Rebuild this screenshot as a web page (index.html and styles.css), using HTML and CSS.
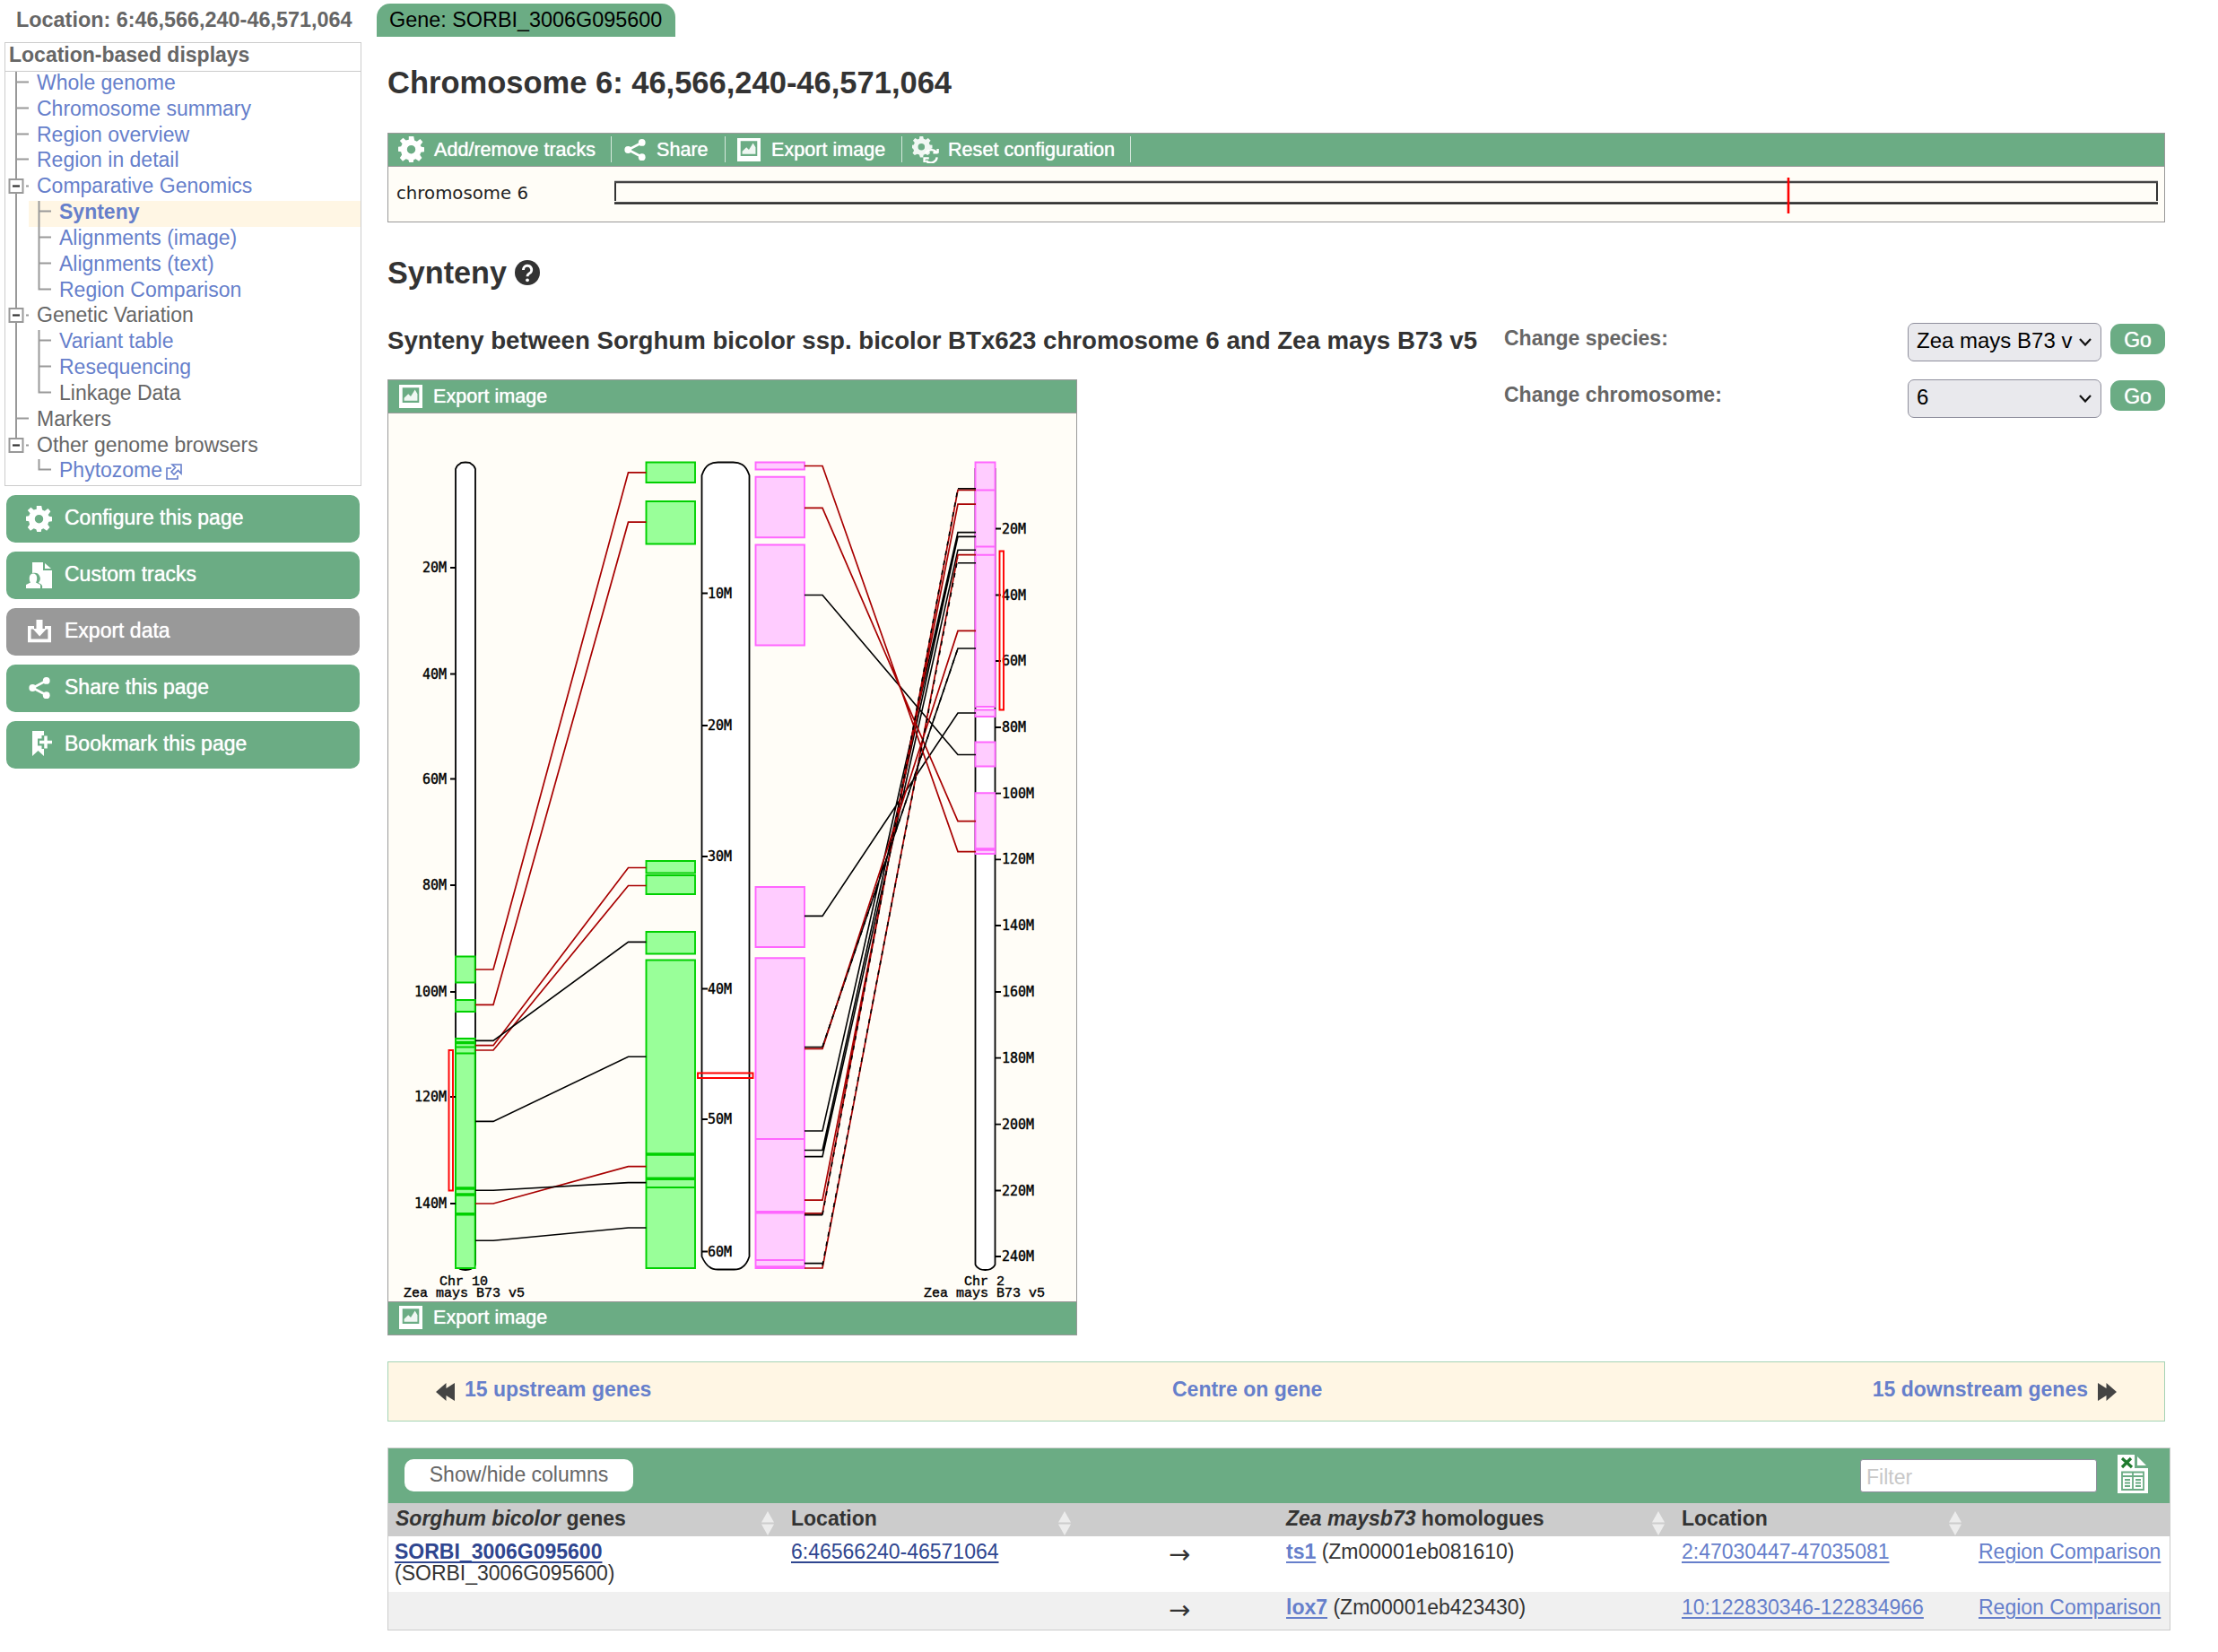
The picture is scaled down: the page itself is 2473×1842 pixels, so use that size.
FILE: index.html
```html
<!DOCTYPE html>
<html lang="en">
<head>
<meta charset="utf-8">
<title>Synteny - Sorghum bicolor</title>
<link rel="stylesheet" href="styles.css">
</head>
<body>
<svg class="defs" aria-hidden="true">
  <symbol id="gear" viewBox="0 0 32 32"><path fill="currentColor" fill-rule="evenodd" d="M13 0h6l1 5 3 1.300 4-3 3.200 3.700-3 4L28.500 13l3.500.500v5.500l-4 .500-1.300 3.500 2.500 3.500-3.700 4-4-2.700L19 29l-.500 3h-5l-1-3-3-1.200-4 2.700-3.500-4 2.500-3.500L3.500 19 0 18.500V13l3.500-.500L5 9 2 5.500 6 2l3.500 3L13 4zM16 11a5.200 5.200 0 1 0 0 10.400A5.200 5.200 0 0 0 16 11z"/></symbol>
  <symbol id="share" viewBox="0 0 32 32"><g fill="currentColor"><circle cx="6.500" cy="16" r="4.800"/><circle cx="25.500" cy="6" r="4.800"/><circle cx="25.500" cy="26" r="4.800"/></g><path d="M25 6.500 6.500 16 25 25.500" fill="none" stroke="currentColor" stroke-width="3.200"/></symbol>
  <symbol id="image" viewBox="0 0 28 28"><path fill="currentColor" fill-rule="evenodd" d="M0 0h28v28H0zM4 3.500v18h20v-18z"/><path fill="currentColor" d="M6 19v-3l5-5 3 3 5-8 3 5v8z" opacity=".9"/></symbol>
  <symbol id="reset" viewBox="0 0 32 32"><path fill="currentColor" fill-rule="evenodd" opacity=".9" d="M9 0h4l.7 3 2.500 1 2.800-2 3 3-2 2.700 1 2.300 3 .500v4l-3 .800-1 2 1.500 2.700-3 2.500-2.500-1.500-2.500 1L13 25H9.500l-1-3.200L6 21l-3 1.500L.500 20l1.700-3-1-2.300L0 14v-3.500L2 10l1-2.500L1 5l2.500-3 3 1.700L8.500 3zM11 8.500a4 4 0 1 0 0 8 4 4 0 0 0 0-8z"/><path d="M30.500 20v-5M30.500 19.500h-5.500M16 20a8 8 0 0 1 13-1M14.500 31v-5h5.500M29.500 25a7.500 7.500 0 0 1-13 4" fill="none" stroke="currentColor" stroke-width="2.600"/></symbol>
  <symbol id="custom" viewBox="0 0 29 29"><path fill="currentColor" d="M7 0h12v9h10v20H18c1-3-1-5-4-6 1-2 3-4 1-8-1-3-4-4-8-3z"/><path fill="currentColor" d="M21 1l7 6h-7z"/><path fill="currentColor" d="M0 29v-4l5-2.500c-2-3-2-10 3-10s5 7 3 10l5 2.500v4z"/></symbol>
  <symbol id="export" viewBox="0 0 26 26"><path fill="currentColor" d="M9.500 0h7v10h4.500l-7.800 8.500L5.500 10h4z"/><path fill="none" stroke="currentColor" stroke-width="3.600" d="M7 8.800H1.800v14.600h22.400V8.800H19"/></symbol>
  <symbol id="bookmark" viewBox="0 0 22 29"><path fill="currentColor" d="M0 0h13v5h-2.500v3.500H6v8h4.500V20H13v8l-6.500-6L0 28z"/><path d="M8 12.500h14M15 5.500v14" stroke="currentColor" stroke-width="3.500"/></symbol>
  <symbol id="rew" viewBox="0 0 22 20"><path fill="#444" d="M0 10 11.500 0v6L21 0v20l-9.500-6v6z"/></symbol>
  <symbol id="fwd" viewBox="0 0 22 20"><path fill="#444" d="M22 10 10.500 0v6L1 0v20l9.500-6v6z"/></symbol>
  <symbol id="sort" viewBox="0 0 14 27"><path fill="#ececec" d="M7 0l7 12.500H0zM0 14.500h14L7 27z"/></symbol>
  <symbol id="mid" viewBox="0 0 60 29"><path d="M12 0v29M12 11.500h14" fill="none" stroke="#999" stroke-width="2"/></symbol>
  <symbol id="box" viewBox="0 0 60 29"><path d="M12 0v4M12 21v8M23 12.500h3" stroke="#999" stroke-width="2"/><path d="M4.500 5h15v15h-15z" fill="#fff" stroke="#999" stroke-width="2"/><path d="M8 12.500h8" stroke="#333" stroke-width="2.200"/></symbol>
  <symbol id="boxend" viewBox="0 0 60 29"><path d="M12 0v4M23 12.500h3" stroke="#999" stroke-width="2"/><path d="M4.500 5h15v15h-15z" fill="#fff" stroke="#999" stroke-width="2"/><path d="M8 12.500h8" stroke="#333" stroke-width="2.200"/></symbol>
  <symbol id="sub" viewBox="0 0 60 29"><path d="M12 0v29M37.500 0v29M37.500 11.500h13.500" fill="none" stroke="#999" stroke-width="2"/></symbol>
  <symbol id="subend" viewBox="0 0 60 29"><path d="M12 0v29M37.500 0v11.500h13.500" fill="none" stroke="#999" stroke-width="2"/></symbol>
  <symbol id="leaf" viewBox="0 0 60 29"><path d="M37.500 0v11.500h13.500" fill="none" stroke="#999" stroke-width="2"/></symbol>
</svg>

<div class="page">
  <aside class="side">
    <div class="loc-tab">Location: 6:46,566,240-46,571,064</div>
    <nav class="tree">
      <h2>Location-based displays</h2>
      <ul>
        <li><svg><use href="#mid"/></svg><a>Whole genome</a></li>
        <li><svg><use href="#mid"/></svg><a>Chromosome summary</a></li>
        <li><svg><use href="#mid"/></svg><a>Region overview</a></li>
        <li><svg><use href="#mid"/></svg><a>Region in detail</a></li>
        <li><svg><use href="#box"/></svg><a>Comparative Genomics</a></li>
        <li class="deep active"><svg><use href="#sub"/></svg><a>Synteny</a></li>
        <li class="deep"><svg><use href="#sub"/></svg><a>Alignments (image)</a></li>
        <li class="deep"><svg><use href="#sub"/></svg><a>Alignments (text)</a></li>
        <li class="deep"><svg><use href="#subend"/></svg><a>Region Comparison</a></li>
        <li><svg><use href="#box"/></svg><span>Genetic Variation</span></li>
        <li class="deep"><svg><use href="#sub"/></svg><a>Variant table</a></li>
        <li class="deep"><svg><use href="#sub"/></svg><a>Resequencing</a></li>
        <li class="deep"><svg><use href="#subend"/></svg><span>Linkage Data</span></li>
        <li><svg><use href="#mid"/></svg><span>Markers</span></li>
        <li><svg><use href="#boxend"/></svg><span>Other genome browsers</span></li>
        <li class="deep"><svg><use href="#leaf"/></svg><a>Phytozome</a><svg class="ext" viewBox="0 0 18 18"><path d="M7 1h10v10l-3.500-3.500L9 12 6 9l4.500-4.500zM6 5H1v12h12v-4" fill="none" stroke="#667fcb" stroke-width="1.600"/></svg></li>
      </ul>
    </nav>
    <div class="tools">
      <a><svg class="i29"><use href="#gear"/></svg>Configure this page</a>
      <a><svg class="i29"><use href="#custom"/></svg>Custom tracks</a>
      <a class="off"><svg class="i26"><use href="#export"/></svg>Export data</a>
      <a><svg class="i26"><use href="#share"/></svg>Share this page</a>
      <a><svg class="ibm"><use href="#bookmark"/></svg>Bookmark this page</a>
    </div>
  </aside>

  <main class="main">
    <div class="gene-tab">Gene: SORBI_3006G095600</div>
    <h1>Chromosome 6: 46,566,240-46,571,064</h1>

    <section class="panel overview">
      <div class="bar">
        <a class="b1"><svg><use href="#gear"/></svg>Add/remove tracks</a>
        <a class="b2"><svg><use href="#share"/></svg>Share</a>
        <a class="b3"><svg><use href="#image"/></svg>Export image</a>
        <a class="b4"><svg><use href="#reset"/></svg>Reset configuration</a>
      </div>
      <svg class="ideogram" viewBox="433 186 1980 61">
        <text x="442" y="222" font-size="19.700" textLength="147" fill="#222">chromosome 6</text>
        <path d="M686 204v20M2405 204v20" stroke="#333" stroke-width="2"/>
        <path d="M685 203h1721" stroke="#444" stroke-width="2.600"/>
        <path d="M685 226.500h1721" stroke="#222" stroke-width="2.400"/>
        <path d="M1994 198v40" stroke="#f00" stroke-width="2.600"/>
      </svg>
    </section>

    <h2 class="title">Synteny <svg viewBox="0 0 28 28"><circle cx="14" cy="14" r="14" fill="#333"/><path d="M9.500 11a4.600 4.600 0 1 1 6.500 4c-1.500.8-2 1.500-2 3.200" fill="none" stroke="#fff" stroke-width="3"/><circle cx="14" cy="22.300" r="1.900" fill="#fff"/></svg></h2>

    <div class="split">
      <div class="left">
        <h3>Synteny between Sorghum bicolor ssp. bicolor BTx623 chromosome 6 and Zea mays B73 v5</h3>
        <section class="panel chart">
          <div class="bar"><a class="b1"><svg><use href="#image"/></svg>Export image</a></div>
          <svg class="map" viewBox="433 461 767 990">
            <g fill="#fff" stroke="#000" stroke-width="1.800">
              <path d="M508 523q1-4 5-6 1-1.500 6-1.500t6 1.500q4 2 5 6V1410q-1 3-5 5-2 1-6 1t-6-1q-4-2-5-5z"/>
              <path d="M782.500 530q3-9 8-12 4-2.500 10-2.500h17q6 0 10 2.500 5 3 8 12V1401q-3 9-8 12-3 2.500-9 2.500h-18q-6 0-9-2.500-5-3-9-12z"/>
              <path d="M1087.500 523V1410q1 3 5 5 2 1 6 1t6-1q4-2 5-5V523z"/>
            </g>
            <g fill="#9f9" stroke="#00d000" stroke-width="1.900">
              <path d="M720.500 515.500h54.500v22.500h-54.500zM720.500 559h54.500v47.500h-54.500zM720.500 960h54.500v13.500h-54.500zM720.500 976h54.500v21h-54.500zM720.500 1039h54.500v24.500h-54.500zM720.500 1070.500h54.500v343.500h-54.500z"/>
              <path d="M508 1066.500h21.700v29h-21.700zM508 1115h21.700v13h-21.700zM508 1158h21.700v256h-21.700z"/>
              <path d="M508 1167.500h21.700M508 1174.500h21.700M720.500 1324h54.500"/>
              <path stroke-width="3.400" d="M720.500 1287h54.500M720.500 1314.300h54.500M508 1162.600h21.700M508 1325h21.700M508 1332h21.700M508 1353.700h21.700"/>
            </g>
            <g fill="#fcf" stroke="#ff66ff" stroke-width="1.900">
              <path d="M842.500 515.500h54.500v8h-54.500zM842.500 531.700h54.500v67.500h-54.500zM842.500 607.500h54.500v112h-54.500zM842.500 989h54.500v67h-54.500zM842.500 1068.300h54.500v345.700h-54.500z"/>
              <path d="M1087.500 515.500h22v272.500h-22zM1087.500 791.500h22v7.500h-22zM1087.500 827.500h22v27h-22zM1087.500 884.300h22v67.700h-22z"/>
              <path d="M842.500 1270h54.500M842.500 1405h54.500M1087.500 546.500h22M1087.500 609.500h22M1087.500 618.700h22"/>
              <path stroke-width="3.400" d="M842.500 1351.800h54.500M842.500 1413h54.500M1087.500 947h22"/>
            </g>
            <g fill="none" stroke="#000" stroke-width="1.600">
              <path d="M897 663.500h20L1068 841.500h20M897 1021.400h20L1068 795h20M897 1167.500h20L1068 723h20M897 1261h20L1068 593.600h20M897 1282.500h20L1068 598.400h20M897 1289.600h20L1068 613.200h20"/>
            </g>
            <g fill="none" stroke="#a80000" stroke-width="1.700">
              <path d="M530 1081h20L700.500 526.800h20M530 1120.400h20L700.500 582.200h20M530 1165.700h20L700.500 967.500h20M530 1171h20L700.500 987.500h20M530 1342h20L700.500 1300.700h20"/>
              <path d="M897 519.500h20L1068 949.600h20M897 566.400h20L1068 915.600h20M897 1169.300h20L1068 703.400h20M897 1338.200h20L1068 562.200h20M897 1352.900h20L1068 546.400h20M897 1414h20L1068 618.700h20"/>
            </g>
            <g fill="none" stroke="#000" stroke-width="1.600">
              <path d="M530 1160.400h20L700.500 1050.400h20M530 1250.400h20L700.500 1178.200h20M530 1327.300h20L700.500 1318.600h20M530 1383.200h20L700.500 1369h20"/>
              <path stroke-dasharray="5 6" d="M917 1354.600L1068 544.700M917 1411L1068 622M917 1167.500L1068 723"/>
              <path d="M897 1354.600h20M1068 544.700h20M897 1408.600h20M1068 627.700h20"/>
            </g>
            <path d="M502 633h6M502 751.500h6M502 868.500h6M502 987h6M502 1106h6M502 1223h6M502 1342h6M783 661.500h6M783 809h6M783 955h6M783 1102.500h6M783 1248h6M783 1395.500h6M1110 589.500h6M1110 663.500h6M1110 737h6M1110 811h6M1110 884.600h6M1110 958.300h6M1110 1032h6M1110 1106h6M1110 1179.600h6M1110 1253.600h6M1110 1327.500h6M1110 1401h6" stroke="#000" stroke-width="1.800"/>
            <g class="lbl" text-anchor="end">
              <text x="498" y="638">20M</text><text x="498" y="756.500">40M</text><text x="498" y="873.500">60M</text><text x="498" y="992">80M</text><text x="498" y="1111">100M</text><text x="498" y="1228">120M</text><text x="498" y="1347">140M</text>
            </g>
            <g class="lbl">
              <text x="789" y="666.500">10M</text><text x="789" y="814">20M</text><text x="789" y="960">30M</text><text x="789" y="1107.500">40M</text><text x="789" y="1253">50M</text><text x="789" y="1400.500">60M</text>
              <text x="1117" y="594.500">20M</text><text x="1117" y="668.500">40M</text><text x="1117" y="742">60M</text><text x="1117" y="816">80M</text><text x="1117" y="889.600">100M</text><text x="1117" y="963.300">120M</text><text x="1117" y="1037">140M</text><text x="1117" y="1111">160M</text><text x="1117" y="1184.600">180M</text><text x="1117" y="1258.600">200M</text><text x="1117" y="1332.500">220M</text><text x="1117" y="1406">240M</text>
            </g>
            <g class="lbl names">
              <text x="490" y="1432.500">Chr 10</text><text x="450" y="1445.500">Zea mays B73 v5</text>
              <text x="1075" y="1432.500">Chr 2</text><text x="1030" y="1445.500">Zea mays B73 v5</text>
            </g>
            <path d="M500.500 1171h4.500v156.500h-4.500zM778 1196.500h61.500v5.500h-61.500zM1114.500 614.500h4.500v177h-4.500z" fill="none" stroke="#f00" stroke-width="1.900"/>
          </svg>
          <div class="bar foot"><a class="b1"><svg><use href="#image"/></svg>Export image</a></div>
        </section>
      </div>
      <form class="change">
        <div class="row"><label>Change species:</label><div class="select"><span>Zea mays B73 v</span><svg viewBox="0 0 14 9"><path d="M1 1l6 6.500L13 1" fill="none" stroke="#111" stroke-width="2.200"/></svg></div><button type="button">Go</button></div>
        <div class="row"><label>Change chromosome:</label><div class="select"><span>6</span><svg viewBox="0 0 14 9"><path d="M1 1l6 6.500L13 1" fill="none" stroke="#111" stroke-width="2.200"/></svg></div><button type="button">Go</button></div>
      </form>
    </div>

    <nav class="pager">
      <a><svg><use href="#rew"/></svg>15 upstream genes</a>
      <a>Centre on gene</a>
      <a>15 downstream genes<svg><use href="#fwd"/></svg></a>
    </nav>

    <section class="genes">
      <div class="gbar">
        <a class="cols">Show/hide columns</a>
        <input type="text" placeholder="Filter">
        <svg class="xls" viewBox="0 0 34 43"><path fill="#fff" d="M0 0h19v15h15v28H0z"/><path fill="#fff" d="M22 2l10 10H22z"/><path d="M5 4l11 10M15 4L5 14" stroke="#1f7a2e" stroke-width="3.200"/><path d="M5 19.500h24v19.500H5zM5 24h24M17 19.500V39M8 28h6M8 31.500h6M8 35h6M20 28h6M20 31.500h6M20 35h6" fill="none" stroke="#6bac84" stroke-width="1.800"/></svg>
      </div>
      <div class="tr head">
        <div><span><i>Sorghum bicolor</i> genes</span><svg><use href="#sort"/></svg></div>
        <div><span>Location</span><svg><use href="#sort"/></svg></div>
        <div></div>
        <div><span><i>Zea maysb73</i> homologues</span><svg><use href="#sort"/></svg></div>
        <div><span>Location</span><svg><use href="#sort"/></svg></div>
        <div></div>
      </div>
      <div class="tr r1">
        <div class="c1"><a class="seen"><b>SORBI_3006G095600</b></a><br>(SORBI_3006G095600)</div>
        <div><a class="seen">6:46566240-46571064</a></div>
        <div class="arrow">→</div>
        <div><a><b>ts1</b></a> (Zm00001eb081610)</div>
        <div><a>2:47030447-47035081</a></div>
        <div><a>Region Comparison</a></div>
      </div>
      <div class="tr r2">
        <div></div>
        <div></div>
        <div class="arrow">→</div>
        <div><a><b>lox7</b></a> (Zm00001eb423430)</div>
        <div><a>10:122830346-122834966</a></div>
        <div><a>Region Comparison</a></div>
      </div>
    </section>
  </main>
</div>
</body>
</html>
```

FILE: styles.css
```css
* { box-sizing: border-box; }
body { margin: 0; background: #fff; color: #333; font: 23px/28px "Liberation Sans", Arial, sans-serif; }
svg { display: block; flex: none; }
.defs { position: absolute; width: 0; height: 0; }
h1, h2, h3, ul { margin: 0; padding: 0; }
.page { display: flex; width: 2473px; height: 1842px; overflow: hidden; }

.side { width: 420px; padding-left: 5px; color: #666; }
.loc-tab { height: 47px; padding: 8px 0 0 13px; font-weight: bold; font-size: 23.400px; white-space: nowrap; }
.tree { width: 398px; height: 495px; border: 1px solid #ccc; }
.tree h2 { height: 32px; padding-left: 4px; border-bottom: 1px solid #ccc; font-size: 23px; line-height: 27px; }
.tree ul { list-style: none; }
.tree li { display: flex; height: 28.830px; line-height: 25px; white-space: nowrap; }
.tree li > svg:first-child { width: 60px; height: 29px; margin-right: -25px; }
.tree li.deep > svg:first-child { margin-right: 0; }
.tree a { color: #667fcb; }
.tree .active { font-weight: bold; background: linear-gradient(to right, transparent 26px, #fff6e4 26px); }
.tree .ext { width: 18px; height: 18px; margin: 5px 0 0 4px; }
.tools { display: flex; flex-direction: column; gap: 10px; padding: 10px 0 0 2px; }
.tools a { display: flex; align-items: center; width: 394px; height: 53px; padding: 0 0 3px 22px; border-radius: 10px; background: #6bac84; color: #fff; text-shadow: 0 0 1px #fff; }
.tools .off { background: #999; }
.i29 { width: 29px; height: 29px; margin: 2px 14px 0 0; }
.i26 { width: 26px; height: 26px; margin: 2px 15px 0 2px; }
.ibm { width: 22px; height: 29px; margin: 0 14px 0 7px; }

.main { width: 2000px; }
.gene-tab { width: 333px; height: 37px; margin-top: 4px; padding-left: 14px; border-radius: 15px 15px 0 0; background: #6bac84; color: #000; font-size: 23.400px; line-height: 37px; white-space: nowrap; }
.main > :not(.gene-tab) { margin-left: 12px; }
h1 { height: 107px; padding-top: 31px; font-size: 34.500px; line-height: 40px; }
.panel { border: 1px solid #999; background: #fffdf7; }
.bar { display: flex; height: 37px; padding: 3px 0 4px; border-bottom: 1px solid #999; background: #6bac84; color: #fff; font-size: 21.600px; line-height: 28px; text-shadow: 0 0 1px #fff; }
.bar a { display: flex; align-items: center; height: 29px; border-right: 1px solid #d5e8dc; white-space: nowrap; }
.bar svg { width: 26px; height: 26px; }
.b1 { width: 249px; padding-left: 11px; }
.b1 svg { width: 29px; height: 29px; margin-right: 11px; }
.b2 { width: 127px; padding-left: 13px; }
.b2 svg { margin-right: 11px; }
.b3 { width: 197px; padding-left: 13px; }
.b3 svg { margin-right: 12px; }
.b4 { width: 255px; padding-left: 11px; }
.b4 svg { width: 30px; height: 30px; margin-right: 10px; }
.overview { width: 1982px; height: 100px; }
.ideogram { width: 1980px; height: 61px; font-family: "DejaVu Sans", sans-serif; }
.title { display: flex; height: 112px; padding-top: 36px; font-size: 34.200px; line-height: 40px; }
.title svg { width: 28px; height: 28px; margin: 6px 0 0 9px; }
.split { display: flex; width: 1982px; height: 1158px; }
.left { width: 1245px; }
h3 { height: 63px; padding-top: 5px; font-size: 27.650px; line-height: 30px; white-space: nowrap; }
.chart { width: 769px; height: 1066px; }
.chart .b1 { border: 0; }
.chart .b1 svg { width: 26px; height: 26px; margin: 0 12px 0 1px; }
.chart .bar { height: 37px; padding-top: 3px; }
.chart .foot { padding-top: 2px; border-bottom: 0; border-top: 1px solid #999; }
.map { width: 767px; height: 990px; }
.lbl { font: 15px "DejaVu Sans Mono", monospace; fill: #000; stroke: #000; stroke-width: .4px; }
.names { font-family: "Liberation Mono", monospace; }
.change { flex: 1; color: #666; }
.row { display: flex; align-items: flex-start; height: 63px; }
.row label { width: 450px; padding-top: 3px; font-weight: bold; font-size: 23px; }
.select { display: flex; align-items: center; width: 216px; height: 43px; padding: 0 10px 3px 9px; border: 1px solid #8f8f9d; border-radius: 7px; background: #e9e9ed; color: #000; font-size: 24px; }
.select span { flex: 1; white-space: nowrap; }
.select svg { width: 14px; height: 9px; margin: 2px 0 0 8px; }
.row button { width: 61px; height: 34px; margin: 1px 0 0 10px; padding: 0; border: 0; border-radius: 11px; background: #6bac84; color: #fff; font: 23px/37px "Liberation Sans", Arial, sans-serif; text-shadow: 0 0 1px #fff; }

.pager { display: grid; grid-template-columns: 821px auto 1fr; width: 1982px; height: 67px; padding: 16px 53px 0; border: 1px solid #a5d3b5; background: #fff6e4; color: #667fcb; font-weight: bold; }
.pager a { display: flex; line-height: 29px; }
.pager svg { width: 22px; height: 20px; margin: 7px 10px 0 0; }
.pager a:last-child { justify-content: flex-end; }
.pager a:last-child svg { margin: 7px 0 0 10px; }

.genes { width: 1988px; height: 204px; margin-top: 29px; border: 1px solid #ccc; }
.gbar { display: flex; height: 61px; padding: 7px 24px 0 18px; background: #6bac84; }
.cols { width: 255px; height: 36px; margin: 5px auto 0 0; border-radius: 10px; background: #fff; color: #666; line-height: 34px; text-align: center; }
.gbar input { width: 264px; height: 37px; margin: 5px 23px 0 0; padding: 3px 6px 0; border: 1px solid #8f8f9d; border-radius: 3px; background: #fff; font: 23px "Liberation Sans", Arial, sans-serif; }
.gbar input::placeholder { color: #c8c8c8; opacity: 1; }
.xls { width: 34px; height: 43px; }
.tr { display: grid; grid-template-columns: 440px 331px 221px 441px 331px 1fr; line-height: 24px; white-space: nowrap; }
.tr > div { padding-left: 9px; }
.head { height: 37px; background: #ccc; font-weight: bold; }
.head > div { display: flex; justify-content: space-between; padding: 5px 10px 0 9px; }
.head > div:first-child { padding-left: 8px; }
.head svg { width: 14px; height: 27px; margin-top: 4px; }
.r1 { height: 62px; padding-top: 5px; }
.r2 { height: 42px; padding-top: 5px; background: #f0f0f0; }
.tr > div.c1 { padding-left: 7px; }
.tr > .arrow { padding: 3px 0 0 99px; font: 29px/24px "DejaVu Sans", sans-serif; }
.tr a { color: #667fcb; text-decoration: underline; text-decoration-thickness: 2px; text-underline-offset: 3px; }
.tr .seen { color: #2f4690; }
```
